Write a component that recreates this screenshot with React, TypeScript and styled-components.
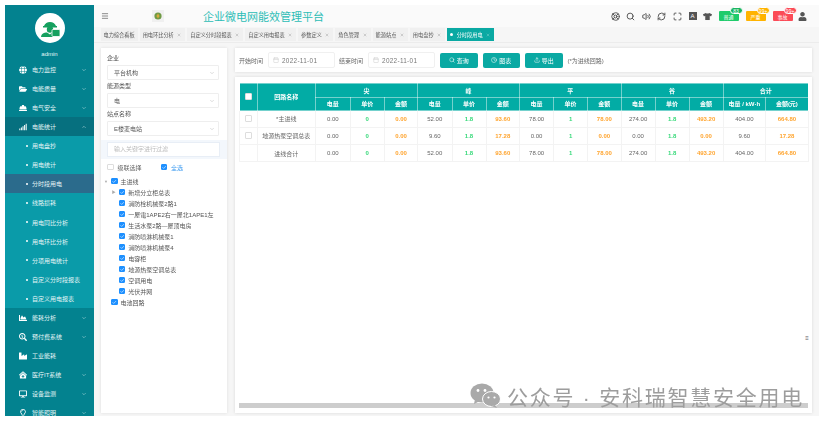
import React from 'react';
import styled, { createGlobalStyle } from 'styled-components';
import { Menu, Search, Volume2, RefreshCw, Maximize, ChevronDown, ChevronUp, Calendar, Clock, Upload, LifeBuoy, X, Check } from 'lucide-react';
import { FaGlobe, FaFolderOpen, FaHardHat, FaSignal, FaChartArea, FaSearchDollar, FaIndustry, FaClinicMedical, FaDesktop, FaRegLightbulb, FaTshirt, FaUser } from 'react-icons/fa';

const Global = createGlobalStyle`
  html, body { margin: 0; padding: 0; background: #fff; overflow: hidden; }
  * { box-sizing: border-box; }
  body { font-family: "Liberation Sans", "Noto Sans CJK SC", sans-serif; }
`;

const Page = styled.div`
  position: relative;
  width: 829px;
  height: 428px;
  padding: 5px 10px 12px 5px;
  display: flex;
  overflow: hidden;
  filter: blur(0.4px);
`;

const Sidebar = styled.aside`
  width: 89px;
  background: #03828f;
  color: #e6f6f7;
  overflow: hidden;
  flex-shrink: 0;
`;

const Brand = styled.div`
  height: 55px;
  padding-top: 8px;
  display: flex;
  flex-direction: column;
  align-items: center;
  gap: 7px;
  font-size: 6px;
  line-height: 8px;
`;

const Avatar = styled.div`
  width: 30px;
  height: 30px;
  border-radius: 50%;
  background: #fff;
  display: flex;
  align-items: center;
  justify-content: center;
`;

const NavRow = styled.div<{ $open?: boolean }>`
  height: 19px;
  display: flex;
  align-items: center;
  padding-left: 14px;
  padding-right: 7px;
  font-size: 6px;
  background: ${(p) => (p.$open ? '#06707f' : 'transparent')};
  svg.lead { width: 8px; height: 8px; margin-right: 5px; color: #fff; }
  svg.chev { width: 6px; height: 6px; margin-left: auto; opacity: 0.8; }
`;

const SubNav = styled.div`
  background: #0a9ba9;
`;

const SubRow = styled.div<{ $active?: boolean }>`
  height: 19.15px;
  display: flex;
  align-items: center;
  padding-left: 21px;
  font-size: 6px;
  background: ${(p) => (p.$active ? '#2b6b8c' : 'transparent')};
  &::before {
    content: '';
    width: 2px;
    height: 2px;
    border-radius: 50%;
    background: #fff;
    margin-right: 4px;
  }
`;

const Main = styled.main`
  flex: 1;
  min-width: 0;
  background: #f6f6f6;
  display: flex;
  flex-direction: column;
`;

const TopBar = styled.header`
  height: 22px;
  background: #fafafa;
  display: flex;
  align-items: center;
  padding-left: 7px;
  padding-right: 9px;
  flex-shrink: 0;
`;

const Burger = styled.div`
  width: 8px;
  display: flex;
  color: #555;
  svg { width: 8px; height: 8px; }
`;

const LogoBox = styled.div`
  margin-left: 43px;
  width: 12px;
  height: 12px;
  background: #f0f0f0;
  display: flex;
  align-items: center;
  justify-content: center;
`;

const Title = styled.h1`
  margin: 0 0 0 39px;
  font-size: 11px;
  font-weight: 400;
  color: #2dbdb6;
  white-space: nowrap;
`;

const Tools = styled.div`
  margin-left: auto;
  display: flex;
  align-items: center;
  color: #555;
`;

const Tool = styled.span`
  width: 15.4px;
  display: flex;
  justify-content: center;
  svg { width: 9px; height: 9px; stroke-width: 2.6; }
`;

const FontTool = styled.span`
  width: 8px;
  height: 8px;
  margin: 0 3.7px;
  background: #555;
  color: #fff;
  font-size: 6px;
  line-height: 8px;
  text-align: center;
`;

const Alarm = styled.span<{ $c: string; $mr: number; $ml?: number }>`
  position: relative;
  width: 20px;
  height: 10px;
  margin-left: ${(p) => p.$ml ?? 0}px;
  margin-right: ${(p) => p.$mr}px;
  background: ${(p) => p.$c};
  color: #fff;
  font-size: 5px;
  border-radius: 1px;
  display: flex;
  align-items: center;
  justify-content: center;
`;

const Bubble = styled.i<{ $c: string }>`
  position: absolute;
  top: -4px;
  right: -4px;
  width: 13px;
  height: 7px;
  border-radius: 4px;
  background: ${(p) => p.$c};
  color: #fff;
  border: 0.5px solid #fff;
  font-size: 5px;
  font-style: normal;
  line-height: 6px;
  text-align: center;
`;

const Tabs = styled.nav`
  height: 16px;
  flex-shrink: 0;
  display: flex;
  align-items: flex-start;
  gap: 2px;
  padding: 1px 0 0 6.5px;
  border-bottom: 1px solid #ececec;
`;

const TabItem = styled.div<{ $active?: boolean }>`
  height: 13px;
  padding: 0 3px;
  display: flex;
  align-items: center;
  gap: 3.6px;
  font-size: 5.2px;
  white-space: nowrap;
  color: ${(p) => (p.$active ? '#fff' : '#555')};
  background: ${(p) => (p.$active ? '#0aa9a3' : '#f0f0f0')};
  svg { width: 4px; height: 4px; opacity: 0.7; margin-right: 0.9px; }
`;

const TabDot = styled.span`
  width: 3px;
  height: 3px;
  border-radius: 50%;
  background: #fff;
`;

const Content = styled.div`
  flex: 1;
  min-height: 0;
  padding: 5px 7px 3px;
  display: flex;
  gap: 8px;
`;

const LeftPanel = styled.section`
  width: 126px;
  background: #fff;
  box-shadow: 0 0 3px rgba(0, 0, 0, 0.1);
  padding-top: 6px;
  font-size: 6px;
  color: #555;
`;

const Field = styled.div`
  padding: 0 8px 2px 6px;
`;

const FieldLabel = styled.div`
  height: 8px;
  line-height: 8px;
  margin-bottom: 3px;
`;

const SelectBox = styled.div`
  height: 15px;
  border: 1px solid #eee;
  border-radius: 1px;
  display: flex;
  align-items: center;
  padding: 0 3px 0 6px;
  svg { margin-left: auto; width: 6px; height: 6px; color: #bbb; }
`;

const FilterStrip = styled.div`
  margin-top: 2px;
  height: 19px;
  background: #f3f7fc;
  padding: 2px 7px 2px 6px;
`;

const FilterInput = styled.div`
  height: 15px;
  background: #fff;
  border: 1px solid #e8eef6;
  color: #bbb;
  padding-left: 6px;
  line-height: 13px;
`;

const CheckRow = styled.div`
  margin-top: 3px;
  height: 10px;
  padding-left: 6px;
  display: flex;
  align-items: center;
`;

const Box = styled.span<{ $on?: boolean }>`
  width: 6.5px;
  height: 6.5px;
  flex-shrink: 0;
  border-radius: 1px;
  background: ${(p) => (p.$on ? '#1e90ff' : '#fff')};
  border: 0.5px solid ${(p) => (p.$on ? '#1e90ff' : '#ddd')};
  display: inline-flex;
  align-items: center;
  justify-content: center;
  color: #fff;
  svg { width: 5px; height: 5px; stroke-width: 3; }
`;

const CheckText = styled.span<{ $blue?: boolean; $gap: number }>`
  margin-left: 4px;
  margin-right: ${(p) => p.$gap}px;
  color: ${(p) => (p.$blue ? '#3d9bf0' : '#666')};
`;

const Tree = styled.div`
  margin-top: 3.5px;
`;

const TreeRow = styled.div<{ $level: number }>`
  height: 11px;
  display: flex;
  align-items: center;
  padding-left: ${(p) => (p.$level ? 10.7 : 3)}px;
  white-space: nowrap;
`;

const Caret = styled.span`
  width: 7px;
  font-size: 4px;
  color: #aaa;
`;

const TreeText = styled.span`
  margin-left: 3px;
  color: #555;
`;

const RightColumn = styled.div`
  flex: 1;
  min-width: 0;
  display: flex;
  flex-direction: column;
  gap: 5px;
`;

const FilterBar = styled.section`
  height: 24px;
  background: #fff;
  box-shadow: 0 0 3px rgba(0, 0, 0, 0.12);
  display: flex;
  align-items: center;
  padding-left: 4px;
  font-size: 6px;
  color: #666;
  flex-shrink: 0;
`;

const DateBox = styled.div<{ $after: number }>`
  width: 67px;
  height: 16px;
  margin: 0 ${(p) => p.$after}px 0 5px;
  border: 1px solid #f0f0f0;
  border-radius: 2px;
  display: flex;
  align-items: center;
  padding-left: 4px;
  gap: 3px;
  font-size: 6.4px;
  letter-spacing: 0.3px;
  color: #777;
  svg { width: 6px; height: 6px; color: #ccc; }
`;

const ActionBtn = styled.button`
  width: 37.5px;
  height: 15px;
  margin-right: 5px;
  padding: 0;
  border: 0;
  border-radius: 2px;
  background: #0aa9a3;
  color: #fff;
  font: inherit;
  display: flex;
  align-items: center;
  justify-content: center;
  gap: 2px;
  svg { width: 6px; height: 6px; }
`;

const Hint = styled.span`
  color: #666;
`;

const TablePanel = styled.section`
  position: relative;
  flex: 1;
  min-height: 0;
  background: #fff;
  box-shadow: 0 0 3px rgba(0, 0, 0, 0.12);
  padding: 5.5px 5px 5px 4px;
  display: flex;
  flex-direction: column;
`;

const DataTable = styled.table`
  width: 568px;
  table-layout: fixed;
  border-collapse: collapse;
  font-size: 6px;
  text-align: center;
`;

const Head = styled.th<{ $h?: number }>`
  height: ${(p) => p.$h ?? 14}px;
  padding: 0;
  background: #02aca5;
  color: #fff;
  font-weight: 700;
  border: 0.5px solid rgba(255, 255, 255, 0.45);
`;

const Cell = styled.td<{ $h: number; $tone?: 'green' | 'orange' }>`
  height: ${(p) => p.$h}px;
  padding: 0;
  border: 1px solid #f3f3f3;
  color: ${(p) => (p.$tone === 'green' ? '#38d97a' : p.$tone === 'orange' ? '#ffa42e' : '#666')};
  font-weight: ${(p) => (p.$tone ? 700 : 400)};
`;

const Scrollbar = styled.div`
  margin-top: auto;
  height: 5px;
  background: #cdcdcd;
  margin-right: -1px;
`;

const SideHandle = styled.span`
  position: absolute;
  right: 2px;
  top: 258px;
  width: 6px;
  height: 7px;
  background: #fff;
  font-size: 6px;
  line-height: 7px;
  color: #555;
  text-align: center;
`;

const Watermark = styled.div`
  position: absolute;
  left: 470px;
  top: 380.5px;
  display: flex;
  align-items: center;
  gap: 6px;
  color: #9d9d9d;
  font-size: 21px;
  letter-spacing: 1.75px;
  white-space: nowrap;
`;

const ProfileIcon = () => (
  <svg width="24" height="24" viewBox="0 0 24 24" fill="#15a05f">
    <path d="M6 10a6.5 6.5 0 0 1 12 0h1v1.5H5V10z" />
    <circle cx="12" cy="13.5" r="3.2" />
    <path d="M3 21c.5-3.5 3-4.5 6-4.5l3 2 2-2h1v4.5z" />
    <rect x="14" y="13.5" width="8" height="7" rx="1" fill="#15a05f" stroke="#fff" strokeWidth=".8" />
  </svg>
);

const MiniLogo = () => (
  <svg width="8" height="8" viewBox="0 0 10 10">
    <circle cx="5" cy="5" r="4.5" fill="#6f9a45" />
    <path d="M3 5l2-3 2 3-2 3z" fill="#d9a93b" />
  </svg>
);

const WeChat = () => (
  <svg width="31" height="25" viewBox="0 0 31 25" fill="#a9a9a9">
    <ellipse cx="12" cy="10" rx="11.5" ry="9.5" />
    <path d="M5 16l-1 5 6-3z" />
    <ellipse cx="21.5" cy="16" rx="9" ry="7.5" stroke="#fff" strokeWidth="1" />
    <path d="M25 22l2 3 -6-2z" />
    <circle cx="8" cy="7.5" r="1.4" fill="#fff" />
    <circle cx="15" cy="7.5" r="1.4" fill="#fff" />
    <circle cx="18.5" cy="14.5" r="1.1" fill="#fff" />
    <circle cx="24.5" cy="14.5" r="1.1" fill="#fff" />
  </svg>
);

const topMenu = [
  { label: '电力监控', Icon: FaGlobe },
  { label: '电能质量', Icon: FaFolderOpen },
  { label: '电气安全', Icon: FaHardHat },
];
const subMenu = ['用电盘抄', '用电统计', '分时段用电', '线路损耗', '用电同比分析', '用电环比分析', '分项用电统计', '自定义分时段报表', '自定义用电报表'];
const lowerMenu = [
  { label: '能耗分析', Icon: FaChartArea, chev: true },
  { label: '预付费系统', Icon: FaSearchDollar, chev: true },
  { label: '工业能耗', Icon: FaIndustry, chev: false },
  { label: '医疗IT系统', Icon: FaClinicMedical, chev: true },
  { label: '设备监测', Icon: FaDesktop, chev: true },
  { label: '智能照明', Icon: FaRegLightbulb, chev: true },
];
const tabs = ['用电环比分析', '自定义分时段报表', '自定义用电报表', '参数定义', '角色管理', '能源站点', '用电盘抄'];
const treeItems = ['新增分立柜总表', '消防栓机械泵2路1', '一屋電1APE2右一屋北1APE1左', '生活水泵2路—屋顶电房', '消防喷淋机械泵1', '消防喷淋机械泵4', '电容柜', '地源热泵空调总表', '空调用电', '光伏并网'];
const colWidths = [17.5, 58.5, 34.5, 34.5, 33, 34.5, 34, 33.5, 34, 34, 33.5, 34, 34, 34, 42.5, 42.5];
const groups = ['尖', '峰', '平', '谷'];
const rows = [
  { box: true, name: '*主进线', h: 16.5, v: ['0.00', '0', '0.00', '52.00', '1.8', '93.60', '78.00', '1', '78.00', '274.00', '1.8', '493.20', '404.00', '664.80'] },
  { box: true, name: '地源热泵空调总表', h: 17.5, v: ['0.00', '0', '0.00', '9.60', '1.8', '17.28', '0.00', '1', '0.00', '0.00', '1.8', '0.00', '9.60', '17.28'] },
  { box: false, name: '进线合计', h: 17, v: ['0.00', '0', '0.00', '52.00', '1.8', '93.60', '78.00', '1', '78.00', '274.00', '1.8', '493.20', '404.00', '664.80'] },
];
const toneOf = (i: number): 'green' | 'orange' | undefined => {
  if (i === 13) return 'orange';
  if (i === 12) return undefined;
  return i % 3 === 1 ? 'green' : i % 3 === 2 ? 'orange' : undefined;
};

export default function App() {
  return (
    <Page>
      <Global />
      <Sidebar>
        <Brand>
          <Avatar><ProfileIcon /></Avatar>
          admin
        </Brand>
        {topMenu.map(({ label, Icon }) => (
          <NavRow key={label}>
            <Icon className="lead" />
            {label}
            <ChevronDown className="chev" />
          </NavRow>
        ))}
        <NavRow $open>
          <FaSignal className="lead" />
          电能统计
          <ChevronUp className="chev" />
        </NavRow>
        <SubNav>
          {subMenu.map((s) => (
            <SubRow key={s} $active={s === '分时段用电'}>{s}</SubRow>
          ))}
        </SubNav>
        {lowerMenu.map(({ label, Icon, chev }) => (
          <NavRow key={label}>
            <Icon className="lead" />
            {label}
            {chev && <ChevronDown className="chev" />}
          </NavRow>
        ))}
      </Sidebar>
      <Main>
        <TopBar>
          <Burger><Menu /></Burger>
          <LogoBox><MiniLogo /></LogoBox>
          <Title>企业微电网能效管理平台</Title>
          <Tools>
            <Tool><LifeBuoy /></Tool>
            <Tool><Search /></Tool>
            <Tool><Volume2 /></Tool>
            <Tool><RefreshCw /></Tool>
            <Tool><Maximize /></Tool>
            <FontTool>A</FontTool>
            <Tool><FaTshirt /></Tool>
            <Alarm $c="#1fcb6b" $ml={3} $mr={7}>普通<Bubble $c="#1bb561">83</Bubble></Alarm>
            <Alarm $c="#ffb300" $mr={7}>严重<Bubble $c="#ffb300">99+</Bubble></Alarm>
            <Alarm $c="#fb4b57" $mr={2}>事故<Bubble $c="#fb4b57">99+</Bubble></Alarm>
            <Tool><FaUser /></Tool>
          </Tools>
        </TopBar>
        <Tabs>
          <TabItem>电力综合看板</TabItem>
          {tabs.map((t) => (
            <TabItem key={t}>{t}<X /></TabItem>
          ))}
          <TabItem $active><TabDot />分时段用电<X /></TabItem>
        </Tabs>
        <Content>
          <LeftPanel>
            <Field>
              <FieldLabel>企业</FieldLabel>
              <SelectBox>平台机构<ChevronDown /></SelectBox>
            </Field>
            <Field>
              <FieldLabel>能源类型</FieldLabel>
              <SelectBox>电<ChevronDown /></SelectBox>
            </Field>
            <Field>
              <FieldLabel>站点名称</FieldLabel>
              <SelectBox>E楼変电站<ChevronDown /></SelectBox>
            </Field>
            <FilterStrip>
              <FilterInput>输入关键字进行过滤</FilterInput>
            </FilterStrip>
            <CheckRow>
              <Box />
              <CheckText $gap={19}>级联选择</CheckText>
              <Box $on><Check /></Box>
              <CheckText $blue $gap={0}>全选</CheckText>
            </CheckRow>
            <Tree>
              <TreeRow $level={0}>
                <Caret>▼</Caret>
                <Box $on><Check /></Box>
                <TreeText>主进线</TreeText>
              </TreeRow>
              {treeItems.map((t, i) => (
                <TreeRow key={t} $level={1}>
                  <Caret>{i === 0 ? '▶' : ''}</Caret>
                  <Box $on><Check /></Box>
                  <TreeText>{t}</TreeText>
                </TreeRow>
              ))}
              <TreeRow $level={0}>
                <Caret />
                <Box $on><Check /></Box>
                <TreeText>电池回路</TreeText>
              </TreeRow>
            </Tree>
          </LeftPanel>
          <RightColumn>
            <FilterBar>
              开始时间
              <DateBox $after={4}><Calendar />2022-11-01</DateBox>
              结束时间
              <DateBox $after={5}><Calendar />2022-11-01</DateBox>
              <ActionBtn><Search />查询</ActionBtn>
              <ActionBtn><Clock />图表</ActionBtn>
              <ActionBtn><Upload />导出</ActionBtn>
              <Hint>(*为进线回路)</Hint>
            </FilterBar>
            <TablePanel>
              <DataTable>
                <colgroup>
                  {colWidths.map((w, i) => <col key={i} style={{ width: w }} />)}
                </colgroup>
                <thead>
                  <tr>
                    <Head rowSpan={2}><Box /></Head>
                    <Head rowSpan={2}>回路名称</Head>
                    {groups.map((g) => <Head key={g} colSpan={3}>{g}</Head>)}
                    <Head colSpan={2}>合计</Head>
                  </tr>
                  <tr>
                    {groups.flatMap((g) => ['电量', '单价', '金额'].map((c) => (
                      <Head key={g + c} $h={13.5}>{c}</Head>
                    )))}
                    <Head $h={13.5}>电量 / kW·h</Head>
                    <Head $h={13.5}>金额(元)</Head>
                  </tr>
                </thead>
                <tbody>
                  {rows.map((r) => (
                    <tr key={r.name}>
                      <Cell $h={r.h}>{r.box && <Box />}</Cell>
                      <Cell $h={r.h}>{r.name}</Cell>
                      {r.v.map((v, i) => <Cell key={i} $h={r.h} $tone={toneOf(i)}>{v}</Cell>)}
                    </tr>
                  ))}
                </tbody>
              </DataTable>
              <Scrollbar />
              <SideHandle>≡</SideHandle>
            </TablePanel>
          </RightColumn>
        </Content>
      </Main>
      <Watermark><WeChat />公众号 · 安科瑞智慧安全用电</Watermark>
    </Page>
  );
}
